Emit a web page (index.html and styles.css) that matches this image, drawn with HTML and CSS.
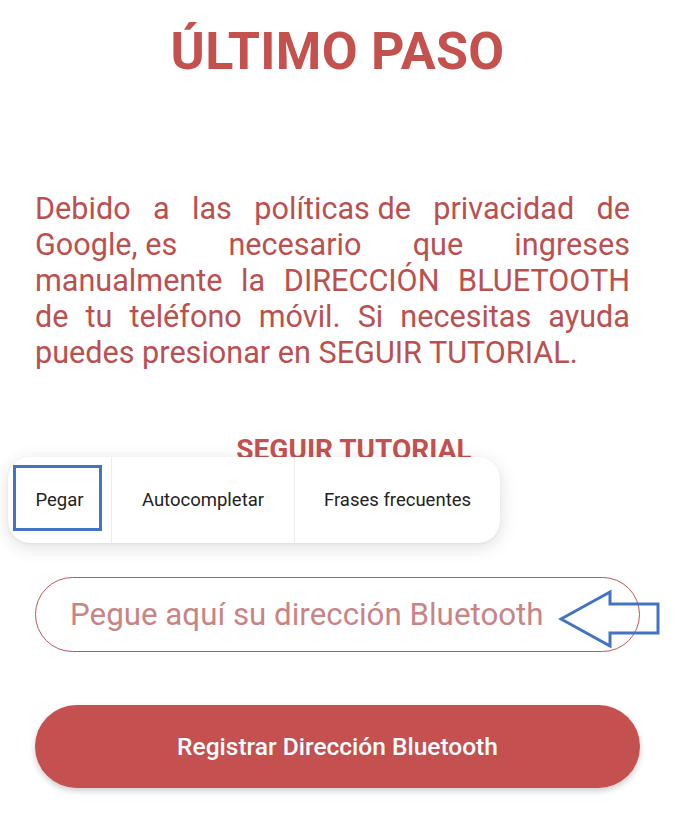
FILE: index.html
```html
<!DOCTYPE html>
<html lang="es">
<head>
<meta charset="utf-8">
<link rel="stylesheet" href="styles.css">
</head>
<body>
<main class="screen">
  <h1 class="title">ÚLTIMO PASO</h1>
  <div class="intro">
    <span class="line">Debido a las <span class="grp">políticas de</span> privacidad de</span>
    <span class="line"><span class="grp">Google, es</span> necesario que ingreses</span>
    <span class="line">manualmente la DIRECCIÓN BLUETOOTH</span>
    <span class="line">de tu teléfono móvil. Si necesitas ayuda</span>
    <span class="line last">puedes presionar en SEGUIR TUTORIAL.</span>
  </div>
  <div class="tutorial-wrap">
    <a class="tutorial">SEGUIR TUTORIAL</a>
    <div class="popup">
      <div class="popup-item pegar">Pegar</div>
      <div class="popup-item auto">Autocompletar</div>
      <div class="popup-item frases">Frases frecuentes</div>
      <div class="highlight"></div>
    </div>
  </div>
  <div class="field-wrap">
    <div class="field">Pegue aquí su dirección Bluetooth</div>
    <svg class="arrow" width="103" height="62" viewBox="0 0 103 62">
      <path d="M3 31 L52 4 L52 16 L100 16 L100 45 L52 45 L52 58 Z" fill="none" stroke="#4472c4" stroke-width="3" stroke-linejoin="miter"/>
    </svg>
  </div>
  <button class="submit">Registrar Dirección Bluetooth</button>
</main>
</body>
</html>
```
FILE: styles.css
```css
html, body {
  margin: 0;
  padding: 0;
  background: #ffffff;
}
body {
  font-family: Roboto, "Noto Sans", sans-serif;
}
.screen {
  width: 675px;
  height: 822px;
  padding: 0 35px;
  box-sizing: border-box;
  display: flex;
  flex-direction: column;
}
.title {
  margin: 20px 0 0;
  text-align: center;
  font-size: 52px;
  line-height: 64px;
  font-weight: 700;
  color: #c5514f;
  letter-spacing: 0.3px;
}
.intro {
  margin-top: 107px;
  margin-right: 10px;
  font-size: 30.6px;
  line-height: 36px;
  color: #bb5050;
}
.line {
  display: block;
  text-align: justify;
  text-align-last: justify;
  white-space: nowrap;
}
.grp {
  display: inline-block;
}
.line.last {
  text-align-last: left;
}
.tutorial-wrap {
  position: relative;
  margin-top: 59px;
  padding-left: 33px;
  height: 40px;
  display: flex;
  justify-content: center;
}
.tutorial {
  font-size: 28px;
  line-height: 40px;
  font-weight: 700;
  color: #c5514f;
}
.popup {
  position: absolute;
  left: -27px;
  top: 27px;
  width: 492px;
  height: 86px;
  background: #fff;
  border-radius: 22px;
  box-shadow: 0 4px 18px rgba(0,0,0,0.13), 0 1px 3px rgba(0,0,0,0.05);
  display: flex;
  align-items: center;
  font-size: 18.5px;
  color: #222;
}
.popup-item {
  height: 100%;
  display: flex;
  align-items: center;
  justify-content: center;
}
.pegar { width: 103px; }
.auto { width: 182px; border-left: 1px solid #ececec; }
.frases { flex: 1; border-left: 1px solid #ececec; }
.highlight {
  position: absolute;
  left: 5px;
  top: 8px;
  width: 83px;
  height: 60px;
  border: 3px solid #4472c4;
}
.field-wrap {
  position: relative;
  margin-top: 107px;
}
.field {
  height: 75px;
  border: 1.5px solid #b5595b;
  border-radius: 38px;
  box-sizing: border-box;
  display: flex;
  align-items: center;
  padding-left: 34px;
  font-size: 31.3px;
  color: #c98486;
}
.arrow {
  position: absolute;
  left: 523px;
  top: 11px;
}
.submit {
  margin-top: 53px;
  height: 83px;
  width: 605px;
  border: none;
  border-radius: 42px;
  background: #c45050;
  color: #fff;
  font-family: Roboto, sans-serif;
  font-size: 24.5px;
  font-weight: 500;
  box-shadow: 0 3px 6px rgba(0,0,0,0.2);
}
```
